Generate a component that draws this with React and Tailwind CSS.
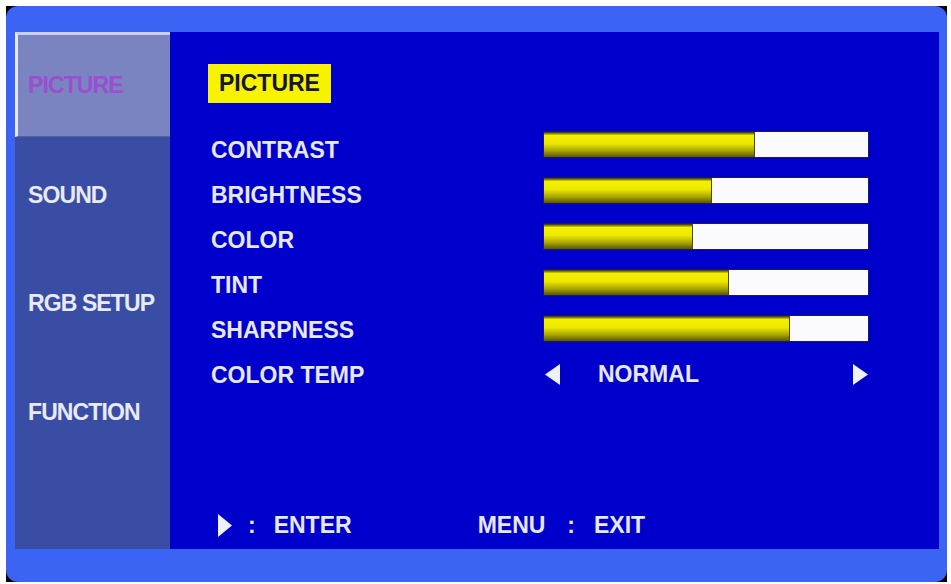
const ITEMS = [
  { l: 'CONTRAST',   v: 65, o: 'mt-[12px]' },
  { l: 'BRIGHTNESS', v: 52, o: 'mt-[10px]' },
  { l: 'COLOR',      v: 46, o: 'mt-[8px]' },
  { l: 'TINT',       v: 57, o: 'mt-[7px]' },
  { l: 'SHARPNESS',  v: 76, o: 'mt-[4px]' },
]

const font = { fontFamily: '"Liberation Sans", Arial, sans-serif' }

function Tri({ dir = 'right', w = 15, h = 21 }) {
  const pts = dir === 'right' ? `0,0 ${w},${h / 2} 0,${h}` : `${w},0 0,${h / 2} ${w},${h}`
  return (
    <svg width={w} height={h} viewBox={`0 0 ${w} ${h}`} className="block">
      <polygon points={pts} fill="#eef0fa" />
    </svg>
  )
}

function Bar({ v }) {
  return (
    <div className="w-[326px] h-[27px] bg-[#fbfbfd] border border-[#1c1c5a] flex">
      <div
        className="h-full border-r border-[#4d4a00] bg-[linear-gradient(180deg,#2f2f10_0%,#f4ef00_14%,#eeea00_45%,#a9a500_75%,#5a5700_100%)]"
        style={{ width: `${v}%` }}
      />
    </div>
  )
}

export default function App() {
  return (
    <div className="w-[951px] h-[584px] bg-white pt-[6px] pl-[6px] pr-[4px] pb-[2px]" style={font}>
      <div className="w-full h-full bg-black">
        <div className="w-full h-full rounded-[12px] bg-[#3b64f4] pt-[26px] pl-[9px] pr-[8px] pb-[33px] flex">
          {/* Sidebar */}
          <div className="w-[155px] h-full bg-[#3a4da5] flex flex-col text-[23px] font-bold tracking-[-0.9px] text-[#e8eaf6]">
            <div className="h-[105px] bg-[#7a84c0] border-t-[3px] border-l-[3px] border-t-[#c9d0f2] border-l-[#e6e9fa] border-b border-b-[#56609e] flex items-center pl-[10px] text-[#9a4ed0]">
              PICTURE
            </div>
            <div className="h-[108px] flex items-center pl-[13px] mt-[4px]">SOUND</div>
            <div className="h-[108px] flex items-center pl-[13px]">RGB SETUP</div>
            <div className="h-[110px] flex items-center pl-[13px]">FUNCTION</div>
          </div>

          {/* Main */}
          <div className="flex-1 h-full bg-[#0000cc] flex flex-col pl-[38px] pt-[32px] pb-[11px] text-[23px] font-bold text-[#e6e8f6]">
            <div className="self-start h-[39px] px-[11px] bg-[#f6f200] text-[#15153a] flex items-center">PICTURE</div>
            <div className="mt-[18px] flex flex-col">
              {ITEMS.map(it => (
                <div key={it.l} className="h-[46px] flex items-center">
                  <div className={`w-[335px] pl-[3px] ${it.o}`}>{it.l}</div>
                  <Bar v={it.v} />
                </div>
              ))}
              <div className="h-[46px] flex items-center">
                <div className="w-[335px] pl-[3px] mt-[2px]">COLOR TEMP</div>
                <div className="w-[326px] flex items-center pl-[2px] pr-[1px]">
                  <Tri dir="left" />
                  <div className="ml-[38px] flex-1">NORMAL</div>
                  <Tri dir="right" />
                </div>
              </div>
            </div>
            <div className="mt-auto h-[26px] flex items-center">
              <div className="ml-[10px]"><Tri dir="right" w={14} h={23} /></div>
              <div className="ml-[16px]">:</div>
              <div className="ml-[18px]">ENTER</div>
              <div className="ml-[126px]">MENU</div>
              <div className="ml-[22px]">:</div>
              <div className="ml-[19px]">EXIT</div>
            </div>
          </div>
        </div>
      </div>
    </div>
  )
}
